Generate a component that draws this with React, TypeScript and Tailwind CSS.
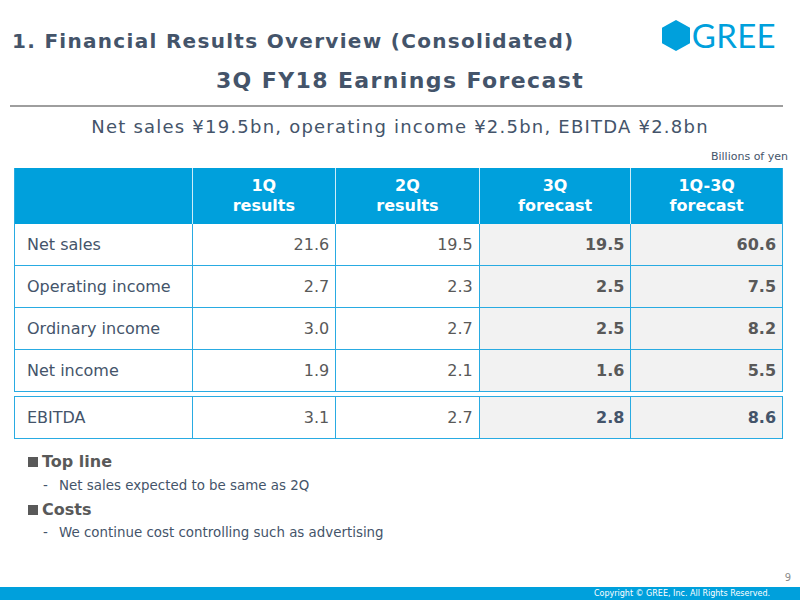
const rows = [
  { label: "Net sales", v: ["21.6", "19.5", "19.5", "60.6"] },
  { label: "Operating income", v: ["2.7", "2.3", "2.5", "7.5"] },
  { label: "Ordinary income", v: ["3.0", "2.7", "2.5", "8.2"] },
  { label: "Net income", v: ["1.9", "2.1", "1.6", "5.5"] },
];

const headers = [
  ["1Q", "results"],
  ["2Q", "results"],
  ["3Q", "forecast"],
  ["1Q-3Q", "forecast"],
];

const widths = ["w-[144px]", "w-[144px]", "w-[152px]", "w-[151px]"];

function Row({ label, v, dark }: { label: string; v: string[]; dark?: boolean }) {
  return (
    <div className="flex h-[42px] border-b border-[#29abe2]">
      <div className="w-[178px] flex items-center pl-[12px] border-r border-[#29abe2] text-[#44546a]">
        {label}
      </div>
      {v.map((n, i) => (
        <div
          key={i}
          className={`${widths[i]} flex items-center justify-end pr-[6px] border-r border-[#29abe2] last:border-r-0 ${
            i >= 2 ? "bg-[#f2f2f2] font-bold" : ""
          } ${i >= 2 ? (dark ? "text-[#44546a]" : "text-[#595959]") : "text-[#595959]"}`}
        >
          {n}
        </div>
      ))}
    </div>
  );
}

function Logo() {
  return (
    <div className="flex items-center gap-[2px]">
      <svg width="28" height="31" viewBox="0 0 28 31">
        <polygon points="14,0 28,7.75 28,23.25 14,31 0,23.25 0,7.75" fill="#00a0dc" />
      </svg>
      <span className="text-[33px] leading-none text-[#00a0dc] font-['Lato',sans-serif] tracking-[0.01em]">GREE</span>
    </div>
  );
}

export default function App() {
  return (
    <div className="w-[800px] h-[600px] bg-white flex flex-col font-['DejaVu_Sans',Verdana,sans-serif] overflow-hidden">
      <div className="flex items-start justify-between pl-[12px] pr-[24px] pt-[19px]">
        <h1 className="mt-[10px] text-[20px] leading-[24px] font-bold text-[#44546a] tracking-[0.065em]">
          1. Financial Results Overview (Consolidated)
        </h1>
        <Logo />
      </div>
      <h2 className="mt-[15px] text-center text-[22px] leading-[26px] font-bold text-[#44546a] tracking-[0.063em]">
        3Q FY18 Earnings Forecast
      </h2>
      <div className="ml-[10px] mt-[11px] mr-[17px] h-[2px] bg-[#9e9e9e]" />
      <p className="mt-[9px] text-center text-[18px] leading-[22px] text-[#44546a] tracking-[0.068em]">
        Net sales ¥19.5bn, operating income ¥2.5bn, EBITDA ¥2.8bn
      </p>
      <div className="mt-[12px] pr-[12px] text-right text-[11px] leading-[13px] text-[#44546a]">Billions of yen</div>

      <div className="ml-[14px] mt-[5px] w-[769px] text-[16px]">
        <div className="border-x border-[#29abe2]">
          <div className="flex h-[56px] bg-[#00a0dc] text-white font-bold leading-[20px]">
            <div className="w-[178px] border-r border-white/80" />
            {headers.map((h, i) => (
              <div
                key={i}
                className={`${widths[i]} flex flex-col items-center justify-center border-r border-white/80 last:border-r-0`}
              >
                <span>{h[0]}</span>
                <span>{h[1]}</span>
              </div>
            ))}
          </div>
          {rows.map((r) => (
            <Row key={r.label} label={r.label} v={r.v} />
          ))}
        </div>
        <div className="mt-[4px] border-x border-t border-[#29abe2]">
          <Row label="EBITDA" v={["3.1", "2.7", "2.8", "8.6"]} dark />
        </div>
      </div>

      <div className="pl-[28px] mt-[13px] text-[#595959]">
        <div className="flex items-center gap-[4px] text-[16px] leading-[20px] font-bold">
          <span className="w-[10px] h-[10px] bg-[#595959]" />
          Top line
        </div>
        <div className="flex pl-[15px] mt-[5px] text-[13.4px] leading-[18px] text-[#44546a]">
          <span className="w-[16px]">-</span>Net sales expected to be same as 2Q
        </div>
        <div className="flex items-center gap-[4px] mt-[5px] text-[16px] leading-[20px] font-bold">
          <span className="w-[10px] h-[10px] bg-[#595959]" />
          Costs
        </div>
        <div className="flex pl-[15px] mt-[4px] text-[13.4px] leading-[18px] text-[#44546a]">
          <span className="w-[16px]">-</span>We continue cost controlling such as advertising
        </div>
      </div>

      <div className="mt-auto">
        <div className="pr-[9px] text-right text-[10px] leading-[12px] text-[#8c8c8c]">9</div>
        <div className="mt-[3px] h-[13px] bg-[#00a0dc] flex items-center justify-end pr-[30px] text-[8px] leading-none text-white">
          Copyright © GREE, Inc. All Rights Reserved.
        </div>
      </div>
    </div>
  );
}
